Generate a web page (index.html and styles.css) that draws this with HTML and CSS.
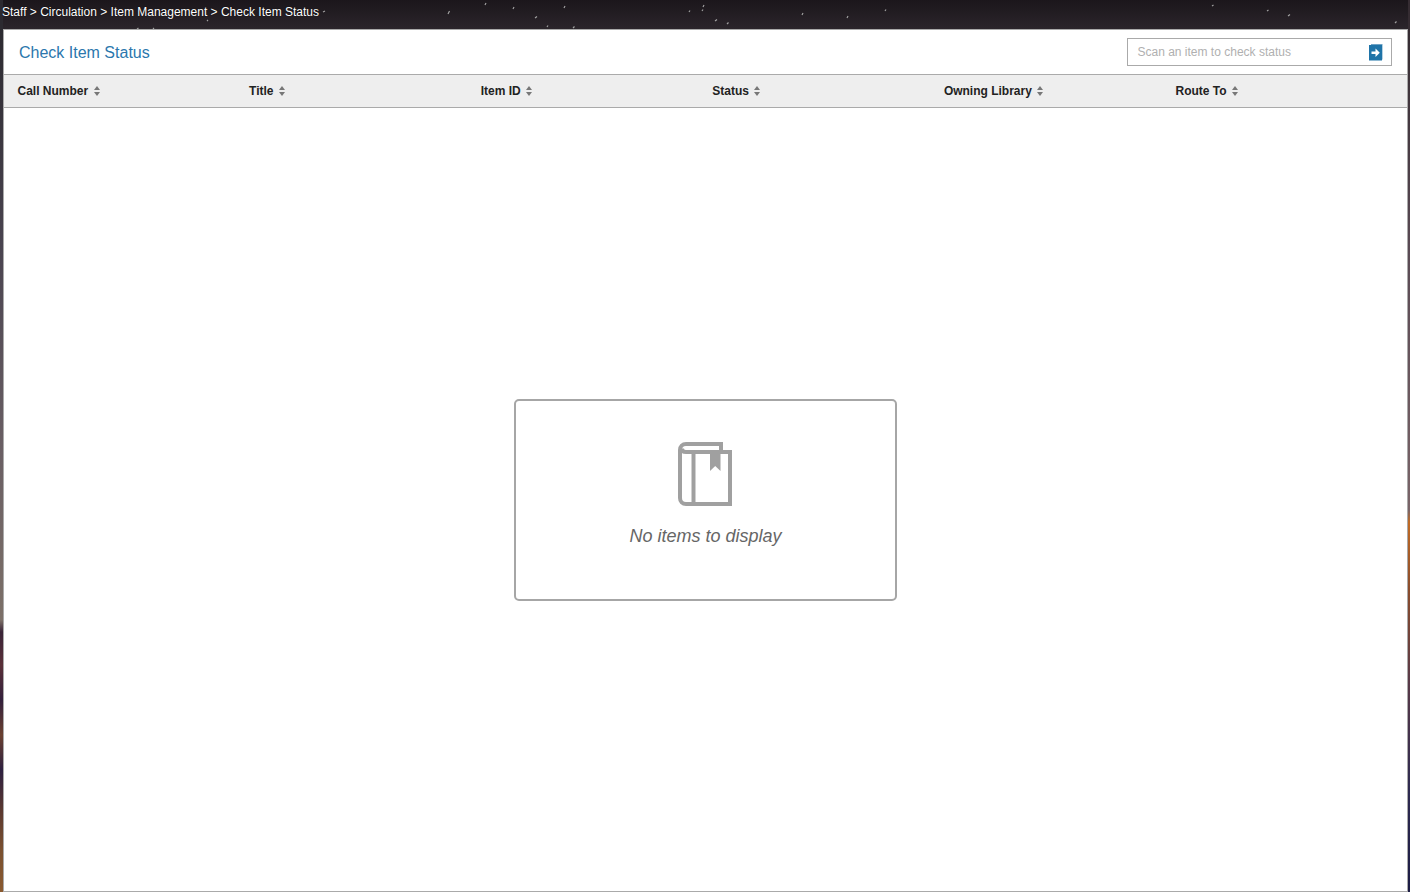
FILE: index.html
```html
<!DOCTYPE html>
<html lang="en">
<head>
	<meta charset="UTF-8">
	<meta name="viewport" content="width=device-width, initial-scale=1.0">
	<title>Check Item Status</title>
	<link rel="stylesheet" href="styles.css">
</head>
<body>
	<div class="crumbs">
		<a>Staff</a> &gt; <a>Circulation</a> &gt; <a>Item Management</a> &gt; <a>Check Item Status</a>
	</div>
	<div class="panel">
		<div class="panel-head">
			<h1 class="panel-title">Check Item Status</h1>
			<div class="scan">
				<span class="scan-text">Scan an item to check status</span>
				<svg class="scan-go" width="14" height="17" viewBox="0 0 14 17">
					<path d="M2 0h11.500v15.500H13V1H2z" fill="#6fa3c6"/>
					<rect x="0" y="1" width="13" height="15.500" fill="#1f74a8"/>
					<path d="M2.500 7.500h4V4.500L10.800 8.700 6.500 12.900V9.900h-4z" fill="#fff"/>
				</svg>
			</div>
		</div>
		<div class="cols">
			<div class="col">Call Number <span class="sort"><i class="up"></i><i class="down"></i></span></div>
			<div class="col">Title <span class="sort"><i class="up"></i><i class="down"></i></span></div>
			<div class="col">Item ID <span class="sort"><i class="up"></i><i class="down"></i></span></div>
			<div class="col">Status <span class="sort"><i class="up"></i><i class="down"></i></span></div>
			<div class="col">Owning Library <span class="sort"><i class="up"></i><i class="down"></i></span></div>
			<div class="col">Route To <span class="sort"><i class="up"></i><i class="down"></i></span></div>
		</div>
		<div class="results">
			<div class="empty">
				<svg class="empty-icon" width="54" height="64" viewBox="0 0 54 64">
					<path d="M43 10V2H8C4.500 2 2 4.500 2 8V56C2 59.500 4.500 62 8 62H52V10H8C5 10 4 8.500 4 6.500" fill="none" stroke="#a0a0a0" stroke-width="4"/>
					<path d="M15.500 10V62" fill="none" stroke="#a0a0a0" stroke-width="4"/>
					<path d="M32 10H42.500V29L37.200 24 32 29z" fill="#a0a0a0"/>
				</svg>
				<p class="empty-text">No items to display</p>
			</div>
		</div>
	</div>
</body>
</html>
```

FILE: styles.css
```css
html, body {
	height: 100%;
}
body {
	margin: 0;
	overflow: hidden;
	display: flex;
	flex-direction: column;
	font-family: "Liberation Sans", Arial, sans-serif;
	background-color: #1c171c;
	background-repeat: no-repeat;
	/* side strips of the photo, then the star streaks, then the dark sky */
	background-image:
		linear-gradient(180deg, #2c2a30 29px, #4a4450 250px, #6a5f64 450px, #7c7068 620px, #3a2438 632px, #5a3038 665px, #33203c 700px, #6a4030 735px, #2e2040 770px, #5a3830 810px, #7a5030 850px, #8a5a30 892px),
		linear-gradient(180deg, #352c32 29px, #5a4a54 250px, #7a6468 510px, #c06a24 522px, #8a4c2c 590px, #5a3a48 680px, #2e2a50 790px, #1c1c44 892px),
		url("data:image/svg+xml,%3Csvg xmlns='http://www.w3.org/2000/svg' width='1410' height='30'%3E%3Cpath stroke='%23a0a0a0' stroke-width='1.200' fill='none' d='M448 14l1.500-3M485 5l1-2M513 9l1-2M535 18l2-1.500M564 8l1-2M689 12l1-1.500M703 7l1-2M702 11l1-1.500M715 21l2-1.500M727 24l1.500-1.500M802 15l1-2M847 18l1-2M885 11l1-1.500M573 28l1.500-1.500M547 27l1-1.500M1288 16l2-1.500M1267 11l1.500-1M1212 6l1.500-1M1395 23l1.500-1.500M137 29l1.500-1M207 21l1-1M153 29l1-1M323 12l2-1'/%3E%3C/svg%3E"),
		linear-gradient(180deg, #1b161b 0, #2b252b 29px);
	background-size: 3px 100%, 2px 100%, 1410px 30px, 100% 100%;
	background-position: left top, right top, 0 0, 0 0;
}

.crumbs {
	height: 29px;
	box-sizing: border-box;
	padding: 5px 0 0 2px;
	font-size: 12px;
	line-height: 15px;
	color: #fff;
	text-shadow: 0 0 1px #000;
}

.panel {
	flex: 1;
	display: flex;
	flex-direction: column;
	margin: 0 2px 0 3px;
	background: #fff;
	border: 1px solid #aaa;
}

.panel-head {
	height: 44px;
	flex: none;
	display: flex;
	align-items: center;
	justify-content: space-between;
	padding: 0 15px;
}
.panel-title {
	margin: 2px 0 0;
	font-size: 16px;
	font-weight: normal;
	color: #2b77ad;
}
.scan {
	width: 265px;
	height: 28px;
	box-sizing: border-box;
	display: flex;
	align-items: center;
	justify-content: space-between;
	padding: 0 8px 0 9.500px;
	border: 1px solid #aaa;
}
.scan-text {
	font-size: 12px;
	color: #b0b0b0;
}

.cols {
	height: 32px;
	flex: none;
	display: grid;
	grid-template-columns: repeat(6, 231.600px);
	align-items: center;
	padding-left: 13.500px;
	background: #eee;
	border-top: 1px solid #aaa;
	border-bottom: 1px solid #aaa;
}
.col {
	font-size: 12px;
	font-weight: bold;
	color: #222;
}
.sort {
	display: inline-block;
	margin-left: 2px;
	vertical-align: -1px;
}
.sort i {
	display: block;
	width: 0;
	height: 0;
	border-left: 3px solid transparent;
	border-right: 3px solid transparent;
}
.sort .up {
	border-bottom: 4px solid #777;
	margin-bottom: 2px;
}
.sort .down {
	border-top: 4px solid #777;
}

.results {
	flex: 1;
	display: flex;
	align-items: center;
	justify-content: center;
}
.empty {
	width: 379px;
	height: 198px;
	display: flex;
	flex-direction: column;
	align-items: center;
	border: 2px solid #a6a6a6;
	border-radius: 5px;
	margin-top: 1px;
}
.empty-icon {
	margin: 41px 2px 0 0;
}
.empty-text {
	margin: 20px 0 0;
	font-size: 18px;
	font-style: italic;
	color: #666;
}
```
